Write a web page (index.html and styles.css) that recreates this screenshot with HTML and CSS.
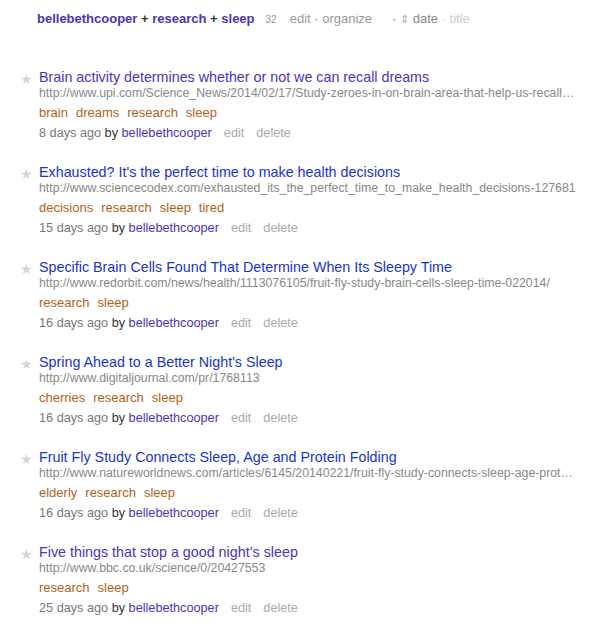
FILE: index.html
```html
<!DOCTYPE html>
<html>
<head>
<meta charset="utf-8">
<link rel="stylesheet" href="styles.css">
</head>
<body>
<div class="header">
  <span class="crumbs"><a class="u">bellebethcooper</a> + <a class="u">research</a> + <a class="u">sleep</a></span>
  <span class="count">32</span>
  <span class="hlinks">edit <span class="dot">·</span> organize</span>
  <span class="sort"><span class="dot">·</span> <span class="arr">⇕</span> <span class="cur">date</span> <span class="dot lt">·</span> <span class="lt">title</span></span>
</div>
<ul class="list">
  <li class="item">
    <span class="star">★</span>
    <div class="body">
      <a class="title visited">Brain activity determines whether or not we can recall dreams</a>
      <div class="url">http://www.upi.com/Science_News/2014/02/17/Study-zeroes-in-on-brain-area-that-help-us-recall-dreams/</div>
      <div class="tags"><a>brain</a><a>dreams</a><a>research</a><a>sleep</a></div>
      <div class="meta"><span class="ago">8 days ago</span> by <a class="user">bellebethcooper</a><a class="act">edit</a><a class="act">delete</a></div>
    </div>
  </li>
  <li class="item">
    <span class="star">★</span>
    <div class="body">
      <a class="title">Exhausted? It's the perfect time to make health decisions</a>
      <div class="url">http://www.sciencecodex.com/exhausted_its_the_perfect_time_to_make_health_decisions-127681</div>
      <div class="tags"><a>decisions</a><a>research</a><a>sleep</a><a>tired</a></div>
      <div class="meta"><span class="ago">15 days ago</span> by <a class="user">bellebethcooper</a><a class="act">edit</a><a class="act">delete</a></div>
    </div>
  </li>
  <li class="item">
    <span class="star">★</span>
    <div class="body">
      <a class="title">Specific Brain Cells Found That Determine When Its Sleepy Time</a>
      <div class="url">http://www.redorbit.com/news/health/1113076105/fruit-fly-study-brain-cells-sleep-time-022014/</div>
      <div class="tags"><a>research</a><a>sleep</a></div>
      <div class="meta"><span class="ago">16 days ago</span> by <a class="user">bellebethcooper</a><a class="act">edit</a><a class="act">delete</a></div>
    </div>
  </li>
  <li class="item">
    <span class="star">★</span>
    <div class="body">
      <a class="title">Spring Ahead to a Better Night's Sleep</a>
      <div class="url">http://www.digitaljournal.com/pr/1768113</div>
      <div class="tags"><a>cherries</a><a>research</a><a>sleep</a></div>
      <div class="meta"><span class="ago">16 days ago</span> by <a class="user">bellebethcooper</a><a class="act">edit</a><a class="act">delete</a></div>
    </div>
  </li>
  <li class="item">
    <span class="star">★</span>
    <div class="body">
      <a class="title">Fruit Fly Study Connects Sleep, Age and Protein Folding</a>
      <div class="url">http://www.natureworldnews.com/articles/6145/20140221/fruit-fly-study-connects-sleep-age-protein-folding.htm</div>
      <div class="tags"><a>elderly</a><a>research</a><a>sleep</a></div>
      <div class="meta"><span class="ago">16 days ago</span> by <a class="user">bellebethcooper</a><a class="act">edit</a><a class="act">delete</a></div>
    </div>
  </li>
  <li class="item">
    <span class="star">★</span>
    <div class="body">
      <a class="title visited">Five things that stop a good night’s sleep</a>
      <div class="url">http://www.bbc.co.uk/science/0/20427553</div>
      <div class="tags"><a>research</a><a>sleep</a></div>
      <div class="meta"><span class="ago">25 days ago</span> by <a class="user">bellebethcooper</a><a class="act">edit</a><a class="act">delete</a></div>
    </div>
  </li>
</ul>
</body>
</html>
```

FILE: styles.css
```css
html, body {
  margin: 0;
  padding: 0;
  background: #fff;
  font-family: "Liberation Sans", Arial, Helvetica, sans-serif;
}
a { text-decoration: none; }

.header {
  display: flex;
  align-items: baseline;
  padding: 11px 0 0 37px;
  height: 25px;
  font-size: 13px;
  color: #999;
}
.crumbs {
  font-weight: bold;
  color: #333;
  font-size: 13px;
}
.crumbs .u { color: #4a35b5; }
.count {
  font-size: 10px;
  color: #999;
  margin-left: 11px;
}
.hlinks {
  margin-left: 13px;
  color: #999;
}
.dot { color: #777; }
.sort {
  margin-left: 20px;
  color: #999;
}
.arr { font-size: 11px; color: #aaa; }
.cur { color: #888; }
.lt { color: #ccc; }

.list {
  list-style: none;
  margin: 32px 0 0 0;
  padding: 0;
}
.item {
  display: flex;
  align-items: flex-start;
  height: 95px;
}
.star {
  flex: none;
  width: 39px;
  padding-right: 6px;
  box-sizing: border-box;
  text-align: right;
  color: #d6d6d6;
  font-size: 14px;
  line-height: 18px;
  margin-top: 2px;
}
.body {
  width: 545px;
  min-width: 0;
}
.title {
  display: block;
  font-size: 14.3px;
  line-height: 18px;
  color: #1a35c3;
}
.title.visited { color: #4a35b5; }
.url {
  font-size: 12.3px;
  line-height: 15px;
  color: #888;
  white-space: nowrap;
  overflow: hidden;
  text-overflow: ellipsis;
  width: 537px;
}
.tags {
  font-size: 13px;
  line-height: 19px;
  margin-top: 2px;
}
.tags a {
  color: #b0621c;
  margin-right: 8px;
}
.meta {
  font-size: 12.7px;
  line-height: 18px;
  margin-top: 2px;
  color: #333;
}
.ago { color: #777; }
.user { color: #4a35b5; }
.act {
  color: #aaa;
  margin-left: 12px;
}
```
